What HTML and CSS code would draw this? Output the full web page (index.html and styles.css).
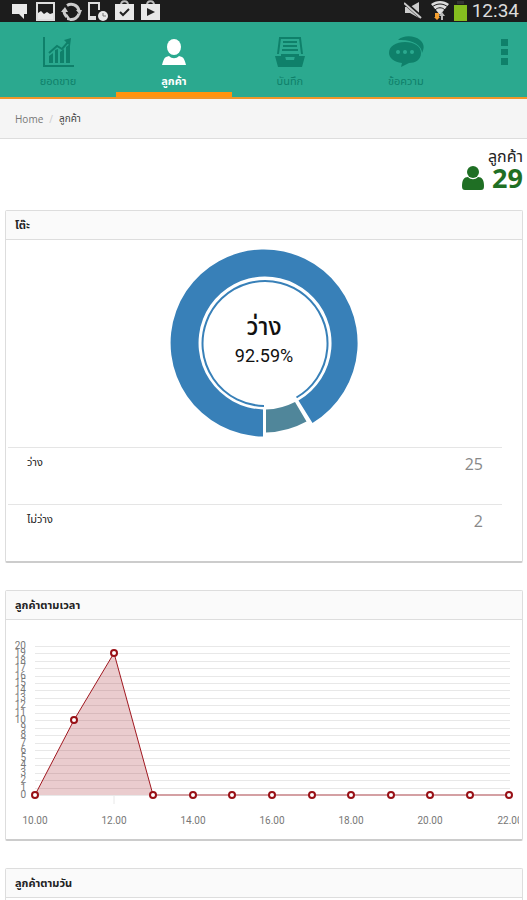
FILE: index.html
```html
<!DOCTYPE html>
<html lang="th">
<head>
    <meta charset="UTF-8">
    <meta name="viewport" content="width=device-width, initial-scale=1.0">
    <title>ลูกค้า</title>
    <link rel="stylesheet" href="styles.css">
</head>
<body>
    <div class="statusbar">
        <svg class="status-left" width="162" height="22" viewBox="0 0 162 22">
            <path fill="#e8e8e8" d="M12 4h15v10h-3v5l-5-5h-7z"/>
            <path fill="none" stroke="#ddd" stroke-width="2" d="M37 3h17v17H37z"/>
            <path fill="#e8e8e8" d="M38 19v-6l3-2 3 3 3-2 3 2 3-1v6z"/>
            <path fill="none" stroke="#ccc" stroke-width="3" d="M67 5.500a8 8 0 0 1 12 5M64 10a8 8 0 0 0 3 7M70 19.500a8 8 0 0 0 9-6"/>
            <path fill="#ccc" d="M61 12l4-5 3 5zM76 10h6l-2 5zM67 14v6l5 1z"/>
            <path fill="none" stroke="#ddd" stroke-width="2" d="M99 10V3h-10v16h7"/>
            <path fill="#ddd" d="M88 16h8v4h-8z"/>
            <circle cx="103" cy="16" r="5" fill="#e8e8e8"/>
            <path fill="none" stroke="#777" d="M103 13v3h3"/>
            <path fill="none" stroke="#bbb" stroke-width="2" d="M121 5c0-5 7-5 7 0M147 5c0-5 7-5 7 0"/>
            <path fill="#e8e8e8" d="M115 4h19v16h-19zM141 4h19v16h-19z"/>
            <path fill="none" stroke="#222" stroke-width="2" d="M120 12l3 3 6-6"/>
            <path fill="#222" d="M147 8l8 4-8 4z"/>
        </svg>
        <div class="status-right">
            <svg width="66" height="22" viewBox="0 0 66 22">
                <path fill="#ccc" d="M1 7h5l9-5v16l-9-5H1z"/>
                <path stroke="#1c1c1c" stroke-width="4" d="M1 3l17 15"/>
                <path stroke="#ccc" stroke-width="2" d="M0 3l17 15"/>
                <path fill="#ddd" d="M27 4c5-4 13-4 18 0l-9 11z"/>
                <path fill="none" stroke="#1c1c1c" d="M28 7c5-4 11-4 16 0M31 10c3-3 7-3 10 0"/>
                <path fill="#f5a030" d="M31 13h4v4h1l-3 3-3-3h1z"/>
                <path fill="#bbb" d="M37 20v-4h-2l3-4 3 4h-2v4z"/>
                <path fill="#333" d="M53 1h7v3h-7z"/>
                <path fill="#85bd1f" d="M50 5h13v16H50z"/>
            </svg>
            <span class="clock">12:34</span>
        </div>
    </div>

    <nav class="tabs">
        <a class="tab" href="#sales">
            <svg width="32" height="32" viewBox="0 0 32 32">
                <path fill="none" stroke="currentColor" stroke-width="2" d="M2 1v29h30"/>
                <path fill="currentColor" d="M7 20l4-3v10H7zM13 14l3-1v14h-3zM18 16l4-3v14h-4zM24 11l4-3v19h-4z"/>
                <path fill="none" stroke="currentColor" stroke-width="2" d="M7 17l8-7 5 3 7-8"/>
                <path fill="currentColor" d="M22 4l7-2-1 8z"/>
            </svg>
            <span>ยอดขาย</span>
        </a>
        <a class="tab active" href="#customers">
            <svg width="32" height="32" viewBox="0 0 32 32">
                <ellipse cx="16" cy="11" rx="7" ry="8" fill="currentColor"/>
                <path fill="currentColor" d="M4 29c1-4 2-7 4-8l3-1c3 3 7 3 10 0l3 1c2 1 3 4 4 8z"/>
            </svg>
            <span>ลูกค้า</span>
        </a>
        <a class="tab" href="#records">
            <svg width="32" height="32" viewBox="0 0 32 32">
                <path fill="none" stroke="currentColor" stroke-width="2" d="M4 18L6 2h20l2 16"/>
                <path stroke="currentColor" stroke-width="2" d="M9 6h14M9 10h14M8 14h16"/>
                <path fill="currentColor" d="M1 20h10l1 4h8l1-4h10l-3 11H4z"/>
                <path fill="currentColor" d="M7 18h18v3H7z"/>
            </svg>
            <span>บันทึก</span>
        </a>
        <a class="tab" href="#messages">
            <svg width="36" height="32" viewBox="0 0 36 32">
                <path fill="currentColor" d="M10 4c5-5 16-5 22 0 5 4 4 9 2 13 0-8-10-14-24-13z"/>
                <path fill="currentColor" d="M17 6c9 0 16 4 16 11s-6 10-12 10l-8 4 1-4C6 26 1 22 1 17 1 10 8 6 17 6z"/>
                <circle cx="10" cy="16" r="2" fill="#2ba98f"/>
                <circle cx="17" cy="16" r="2" fill="#2ba98f"/>
                <circle cx="24" cy="16" r="2" fill="#2ba98f"/>
            </svg>
            <span>ข้อความ</span>
        </a>
        <button class="more" type="button" aria-label="เมนู">
            <svg width="8" height="28" viewBox="0 0 8 28">
                <path fill="currentColor" d="M1 1h7v7H1zM1 11h7v6H1zM1 20h7v7H1z"/>
            </svg>
        </button>
    </nav>

    <div class="breadcrumb">
        <a href="#home">Home</a>
        <span class="divider">/</span>
        <span class="current">ลูกค้า</span>
    </div>

    <main>
        <div class="total">
            <div class="total-label">ลูกค้า</div>
            <div class="total-value">
                <svg width="22" height="24" viewBox="0 0 22 24">
                    <circle cx="11" cy="6" r="6" fill="currentColor"/>
                    <path fill="currentColor" d="M0 20c0-6 2-9 6-9 3 3 7 3 10 0 4 0 6 3 6 9 0 3-1 4-3 4H3c-2 0-3-1-3-4z"/>
                </svg>
                <span>29</span>
            </div>
        </div>

        <section class="panel">
            <h2>โต๊ะ</h2>
            <div class="donut">
                <svg width="200" height="207" viewBox="0 0 200 207">
                    <!-- center 100,103 -->
                    <path fill="#3880b8" d="M99 196.500A93.500 93.500 0 1 1 148.500 183L134.500 160.500A66.500 66.500 0 1 0 99 169.500z"/>
                    <path fill="#50869a" d="M102 192.500A89 89 0 0 0 142.500 181.500L131 162A66.500 66.500 0 0 1 102 169.500z"/>
                    <path fill="none" stroke="#3880b8" stroke-width="2" d="M100 166A62.500 62.500 0 1 1 132.500 157.500"/>
                    <text class="donut-name" x="100" y="95">ว่าง</text>
                    <text class="donut-percent" x="100" y="122">92.59%</text>
                </svg>
            </div>
            <table>
                <tr><th scope="row">ว่าง</th><td>25</td></tr>
                <tr><th scope="row">ไม่ว่าง</th><td>2</td></tr>
            </table>
        </section>

        <section class="panel">
            <h2>ลูกค้าตามเวลา</h2>
            <svg class="chart" viewBox="0 0 516 219">
                <path class="grid" d="M29 26.500H504M29 33.500H504M29 41.500H504M29 48.500H504M29 56.500H504M29 63.500H504M29 70.500H504M29 78.500H504M29 85.500H504M29 93.500H504M29 100.500H504M29 108.500H504M29 115.500H504M29 123.500H504M29 130.500H504M29 138.500H504M29 145.500H504M29 153.500H504M29 160.500H504M29 168.500H504M29 175.500H504M108 176v8"/>
                <g class="y-labels">
                    <text x="20" y="29">20</text>
                    <text x="20" y="36">19</text>
                    <text x="20" y="44">18</text>
                    <text x="20" y="51">17</text>
                    <text x="20" y="59">16</text>
                    <text x="20" y="66">15</text>
                    <text x="20" y="73">14</text>
                    <text x="20" y="81">13</text>
                    <text x="20" y="88">12</text>
                    <text x="20" y="96">11</text>
                    <text x="20" y="103">10</text>
                    <text x="20" y="111">9</text>
                    <text x="20" y="118">8</text>
                    <text x="20" y="126">7</text>
                    <text x="20" y="133">6</text>
                    <text x="20" y="141">5</text>
                    <text x="20" y="148">4</text>
                    <text x="20" y="156">3</text>
                    <text x="20" y="163">2</text>
                    <text x="20" y="171">1</text>
                    <text x="20" y="178">0</text>
                </g>
                <path class="area" d="M29 175L68 100 108 33 147 175z"/>
                <path class="baseline" d="M147 175H504"/>
                <path class="line" d="M29 175L68 100 108 33 147 175"/>
                <g class="points">
                    <circle cx="29" cy="175" r="3"/>
                    <circle cx="68" cy="100" r="3"/>
                    <circle cx="108" cy="33" r="3"/>
                    <circle cx="147" cy="175" r="3"/>
                    <circle cx="187" cy="175" r="3"/>
                    <circle cx="226" cy="175" r="3"/>
                    <circle cx="266" cy="175" r="3"/>
                    <circle cx="306" cy="175" r="3"/>
                    <circle cx="345" cy="175" r="3"/>
                    <circle cx="385" cy="175" r="3"/>
                    <circle cx="424" cy="175" r="3"/>
                    <circle cx="464" cy="175" r="3"/>
                    <circle cx="503" cy="175" r="3"/>
                </g>
                <svg class="x-labels" width="513" height="219">
                    <text x="29" y="204">10.00</text>
                    <text x="108" y="204">12.00</text>
                    <text x="187" y="204">14.00</text>
                    <text x="266" y="204">16.00</text>
                    <text x="345" y="204">18.00</text>
                    <text x="424" y="204">20.00</text>
                    <text x="504" y="204">22.00</text>
                </svg>
            </svg>
        </section>

        <section class="panel">
            <h2>ลูกค้าตามวัน</h2>
            <div class="chart-empty"></div>
        </section>
    </main>
</body>
</html>
```

FILE: styles.css
```css
* {
    box-sizing: border-box;
}

body {
    margin: 0;
    background-color: #fff;
    color: #222;
    font-family: "Open Sans", "Noto Sans Thai", "Noto Sans", sans-serif;
    font-size: 10px;
}

svg {
    display: block;
}

.statusbar {
    display: flex;
    justify-content: space-between;
    height: 22px;
    background-color: #1c1c1c;
}

.status-right {
    display: flex;
    gap: 2px;
    padding-right: 8px;
}

.clock {
    color: #ddd;
    font-family: Roboto, sans-serif;
    font-size: 19px;
    line-height: 22px;
}

.tabs {
    display: flex;
    height: 77px;
    background-color: #2ba98f;
    border-bottom: 2px solid #f0962a;
}

.tab {
    width: 22%;
    display: flex;
    flex-direction: column;
    align-items: center;
    gap: 4px;
    padding-top: 14px;
    border-bottom: 5px solid transparent;
    color: #0f806a;
    font-size: 11px;
    line-height: 18px;
    text-decoration: none;
}

.tab.active {
    border-bottom-color: #ff930f;
    color: #fff;
    font-weight: bold;
}

.more {
    width: 12%;
    padding: 16px 19px 0 0;
    border: none;
    background: none;
    color: #0f806a;
    display: flex;
    justify-content: flex-end;
}

.breadcrumb {
    display: flex;
    align-items: center;
    gap: 6px;
    height: 40px;
    padding: 0 15px;
    background-color: #f5f5f5;
    border-bottom: 1px solid #ddd;
}

.breadcrumb a {
    color: #777;
    text-decoration: none;
}

.divider {
    color: #ccc;
}

.current {
    color: #444;
}

main {
    padding: 0 4px 0 5px;
}

.total {
    display: flex;
    flex-direction: column;
    align-items: flex-end;
    height: 71px;
    padding-top: 8px;
}

.total-label {
    font-size: 16px;
    line-height: 18px;
}

.total-value {
    display: flex;
    align-items: center;
    gap: 8px;
    color: #1f6f24;
    font-size: 27px;
    font-weight: bold;
    line-height: 26px;
}

.panel {
    margin-bottom: 27px;
    border: 1px solid #ddd;
    border-bottom: 2px solid #ccc;
    border-radius: 2px;
}

.panel h2 {
    height: 29px;
    margin: 0;
    padding-left: 9px;
    background-color: #fafafa;
    border-bottom: 1px solid #ddd;
    font-size: 11px;
    font-weight: bold;
    line-height: 28px;
}

.donut {
    display: flex;
    justify-content: center;
}

.donut-name,
.donut-percent {
    fill: #111;
    text-anchor: middle;
    font-size: 24px;
    font-weight: 500;
}

.donut-percent {
    font-family: Roboto, sans-serif;
    font-size: 18px;
    font-weight: normal;
}

table {
    width: calc(100% - 22px);
    margin-left: 2px;
    border-spacing: 0;
}

th,
td {
    height: 57px;
    padding: 4px 19px 0;
    border-top: 1px solid #e5e5e5;
    vertical-align: top;
}

th {
    font-size: 11px;
    font-weight: normal;
    line-height: 20px;
    text-align: left;
}

td {
    color: #888;
    font-size: 16px;
    line-height: 24px;
    text-align: right;
}

.chart {
    width: 100%;
    font-family: Roboto, sans-serif;
}

.grid {
    stroke: #e8e8e8;
}

.area {
    fill: #a01820;
    fill-opacity: 0.22;
}

.baseline {
    stroke: #d4a0a3;
    stroke-width: 2;
}

.line {
    fill: none;
    stroke: #a01820;
    stroke-width: 1;
}

.points circle {
    fill: #fff;
    stroke: #981016;
    stroke-width: 2;
}

.y-labels text {
    fill: #777;
    font-size: 10px;
    text-anchor: end;
}

.x-labels text {
    fill: #777;
    font-size: 10px;
    text-anchor: middle;
}

.chart-empty {
    height: 219px;
}
```
